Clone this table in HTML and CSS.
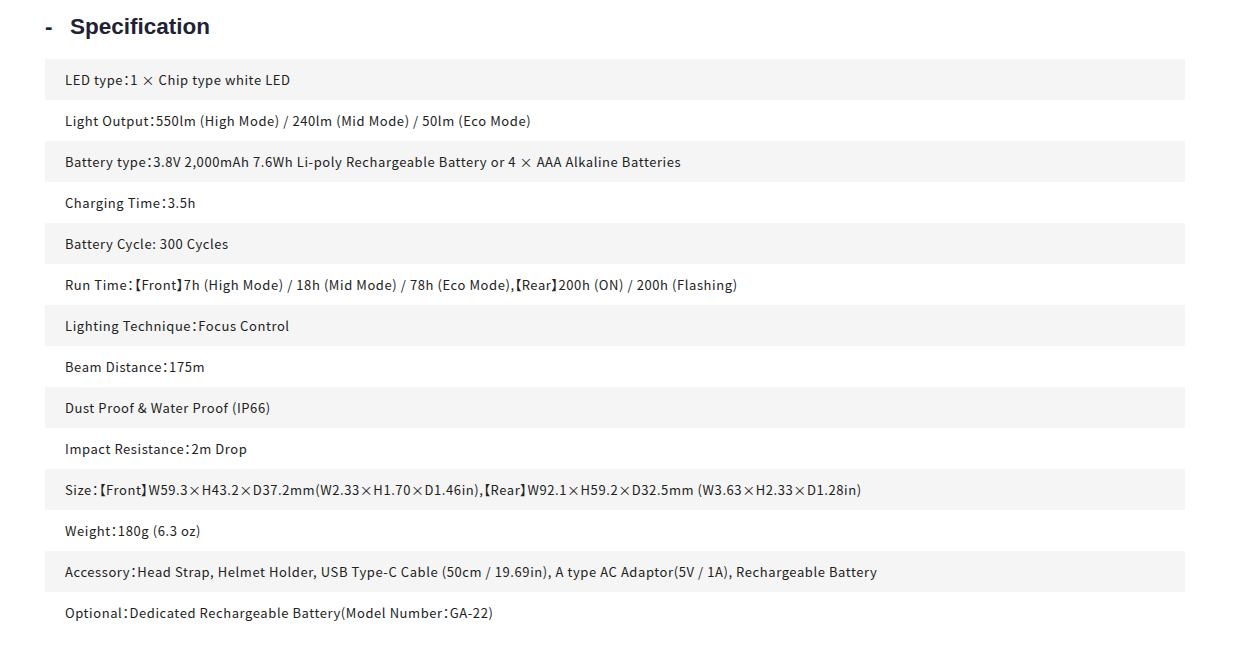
FILE: index.html
```html
<!DOCTYPE html>
<html lang="ja">
<head>
<meta charset="utf-8">
<link rel="stylesheet" href="styles.css">
</head>
<body>
<section class="spec">
  <h2 class="spec-title"><span class="dash">-</span>Specification</h2>
  <ul class="spec-list">
    <li class="row">LED type：1 × Chip type white LED</li>
    <li class="row">Light Output：550lm (High Mode) / 240lm (Mid Mode) / 50lm (Eco Mode)</li>
    <li class="row">Battery type：3.8V 2,000mAh 7.6Wh Li-poly Rechargeable Battery or 4 × AAA Alkaline Batteries</li>
    <li class="row">Charging Time：3.5h</li>
    <li class="row">Battery Cycle: 300 Cycles</li>
    <li class="row">Run Time：【Front】7h (High Mode) / 18h (Mid Mode) / 78h (Eco Mode),【Rear】200h (ON) / 200h (Flashing)</li>
    <li class="row">Lighting Technique：Focus Control</li>
    <li class="row">Beam Distance：175m</li>
    <li class="row">Dust Proof &amp; Water Proof (IP66)</li>
    <li class="row">Impact Resistance：2m Drop</li>
    <li class="row">Size：【Front】W59.3×H43.2×D37.2mm(W2.33×H1.70×D1.46in),【Rear】W92.1×H59.2×D32.5mm (W3.63×H2.33×D1.28in)</li>
    <li class="row">Weight：180g (6.3 oz)</li>
    <li class="row">Accessory：Head Strap, Helmet Holder, USB Type-C Cable (50cm / 19.69in), A type AC Adaptor(5V / 1A), Rechargeable Battery</li>
    <li class="row">Optional：Dedicated Rechargeable Battery(Model Number：GA-22)</li>
  </ul>
</section>
</body>
</html>
```
FILE: styles.css
```css
* { box-sizing: border-box; }
html, body { margin: 0; padding: 0; background: #fff; }
body { font-family: "Noto Sans CJK JP", "Noto Sans", sans-serif; color: #222; }
.spec { padding: 0 58px 0 45px; }
.spec-title {
  margin: 0 0 4px;
  height: 55px;
  padding-bottom: 2px;
  font-family: "Liberation Sans", Arial, sans-serif;
  font-weight: bold;
  font-size: 22.5px;
  line-height: 34px;
  color: #1f2233;
  display: flex;
  align-items: center;
}
.dash { width: 25px; }
.spec-list { list-style: none; margin: 0; padding: 0; }
.row {
  height: 41px;
  display: flex;
  align-items: center;
  padding-left: 20px;
  font-size: 13px;
  letter-spacing: 0.58px;
  font-feature-settings: "palt";
  white-space: nowrap;
  color: #222;
}
.row:nth-child(odd) { background: #f5f5f5; }
```
